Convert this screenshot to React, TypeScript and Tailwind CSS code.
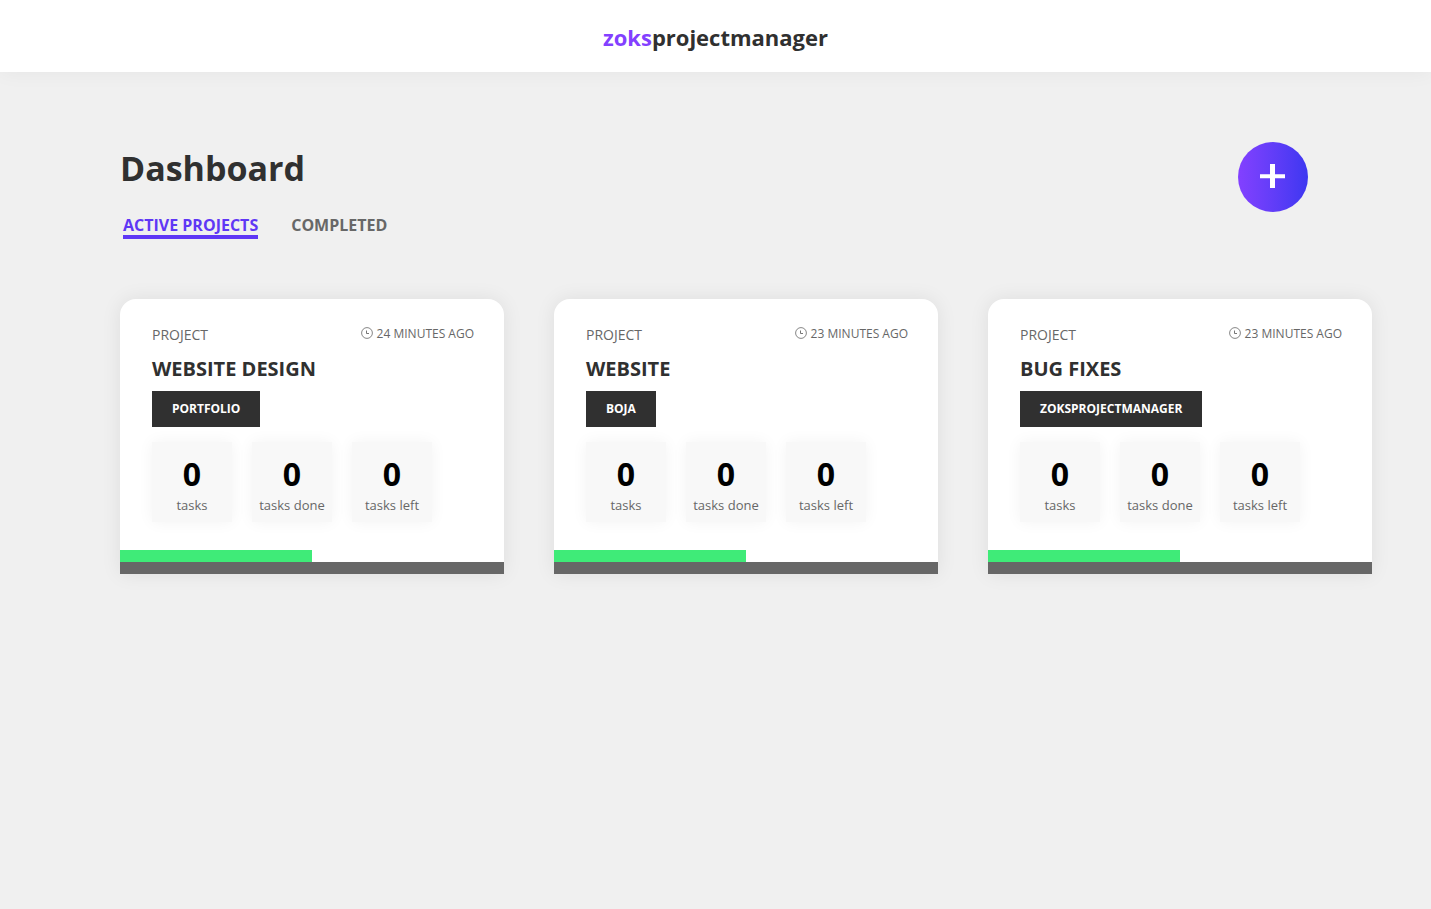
import React, { useState } from "react";

type Project = {
  id: number;
  name: string;
  client: string;
  age: string;
  tasks: number;
  done: number;
};

const projects: Project[] = [
  { id: 1, name: "Website design", client: "Portfolio", age: "24 minutes ago", tasks: 0, done: 0 },
  { id: 2, name: "Website", client: "Boja", age: "23 minutes ago", tasks: 0, done: 0 },
  { id: 3, name: "Bug fixes", client: "zoksprojectmanager", age: "23 minutes ago", tasks: 0, done: 0 },
];

function ClockIcon() {
  return (
    <svg viewBox="0 0 12 12" className="mb-0.5 size-3" fill="none" stroke="currentColor" aria-hidden="true">
      <circle cx="6" cy="6" r="5.4" strokeWidth="0.8" />
      <path d="M5.500 3.500v3h2.500" strokeWidth="0.9" />
    </svg>
  );
}

function Stat({ value, label }: { value: number; label: string }) {
  return (
    <div className="flex size-20 flex-col items-center bg-[#f8f8f8] pt-3 shadow-[0_0_15px_rgba(0,0,0,0.05)]">
      <span className="text-[32px] leading-10 font-bold text-black">{value}</span>
      <span className="text-[13px] leading-[22px] whitespace-nowrap text-[#676767]">{label}</span>
    </div>
  );
}

function ProjectCard({ project }: { project: Project }) {
  return (
    <article className="overflow-hidden rounded-t-2xl bg-white shadow-[0_0_20px_rgba(0,0,0,0.08)]">
      <div className="pt-6 pr-[30px] pb-7 pl-8">
        <div className="flex items-start justify-between text-[#676767] uppercase">
          <span className="text-sm leading-6">Project</span>
          <span className="flex items-center gap-1 text-xs leading-[22px]">
            <ClockIcon />
            {project.age}
          </span>
        </div>
        <h2 className="mt-2 text-xl leading-7 font-bold text-[#303030] uppercase">{project.name}</h2>
        <div className="mt-2 flex">
          <span className="bg-[#303030] px-5 text-xs leading-9 font-bold text-white uppercase">{project.client}</span>
        </div>
        <div className="mt-[15px] flex gap-5">
          <Stat value={project.tasks} label="tasks" />
          <Stat value={project.done} label="tasks done" />
          <Stat value={project.tasks - project.done} label="tasks left" />
        </div>
      </div>
      <div className="h-3 w-1/2 bg-[#3feb78]" />
      <div className="h-3 bg-[#676767]" />
    </article>
  );
}

const tabStyle = "cursor-pointer border-b-4 text-base leading-5 font-bold uppercase";

export default function App() {
  const [tab, setTab] = useState("active");
  return (
    <div className="min-h-screen bg-[#f0f0f0] font-['Open_Sans','Noto_Sans',sans-serif] text-[#303030]">
      <header className="flex h-[72px] items-center justify-center bg-white pt-0.5 shadow-[0_0_20px_rgba(0,0,0,0.05)]">
        <a href="#" className="text-[22px] leading-8 font-bold">
          <span className="text-[#8340ff]">zoks</span>projectmanager
        </a>
      </header>
      <main className="pt-[70px] pr-[59px] pl-[120px]">
        <div className="flex items-start justify-between pr-16">
          <div>
            <h1 className="text-[34px] leading-[52px] font-bold">Dashboard</h1>
            <nav className="mt-[21px] ml-[3px] flex gap-[33px]">
              <button
                type="button"
                onClick={() => setTab("active")}
                className={`${tabStyle} ${tab === "active" ? "border-[#5f37f5] text-[#5f37f5]" : "border-transparent text-[#676767]"}`}
              >
                Active projects
              </button>
              <button
                type="button"
                onClick={() => setTab("completed")}
                className={`${tabStyle} ${tab === "completed" ? "border-[#5f37f5] text-[#5f37f5]" : "border-transparent text-[#676767]"}`}
              >
                Completed
              </button>
            </nav>
          </div>
          <button
            type="button"
            aria-label="Add project"
            className="flex size-[70px] cursor-pointer items-center justify-center rounded-full bg-linear-to-r from-[#8340ff] to-[#3d37f1] text-white"
          >
            <svg viewBox="0 0 26 26" className="mb-0.5 size-[26px]" aria-hidden="true">
              <path d="M10 1h5v10.300h10v4H15V25h-5v-9.700H0v-4h10z" fill="currentColor" />
            </svg>
          </button>
        </div>
        <section className="mt-[60px] grid grid-cols-3 gap-[50px]">
          {projects.map((project) => (
            <ProjectCard key={project.id} project={project} />
          ))}
        </section>
      </main>
    </div>
  );
}
